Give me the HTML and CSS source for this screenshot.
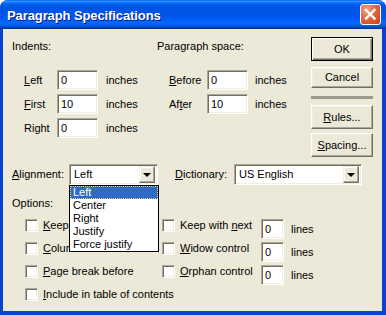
FILE: index.html
```html
<!DOCTYPE html>
<html>
<head>
<meta charset="utf-8">
<link rel="stylesheet" href="styles.css">
</head>
<body>
<div class="window">
  <div class="titlebar">
    <span class="title">Paragraph Specifications</span>
    <span class="close">
      <svg width="21" height="21" viewBox="0 0 21 21"><path d="M6 6 L14.5 14.5 M14.5 6 L6 14.5" stroke="#fff" stroke-width="2.4" stroke-linecap="square"/></svg>
    </span>
  </div>
  <div class="client">
    <div class="top">
      <div class="groups">
        <div class="group indents">
          <div class="group-title">Indents:</div>
          <div class="fields">
            <span class="lbl"><u>L</u>eft</span><span class="input">0</span><span class="unit">inches</span>
            <span class="lbl"><u>F</u>irst</span><span class="input">10</span><span class="unit">inches</span>
            <span class="lbl">Right</span><span class="input">0</span><span class="unit">inches</span>
          </div>
        </div>
        <div class="group para">
          <div class="group-title">Paragraph space:</div>
          <div class="fields">
            <span class="lbl"><u>B</u>efore</span><span class="input">0</span><span class="unit">inches</span>
            <span class="lbl">Af<u>t</u>er</span><span class="input">10</span><span class="unit">inches</span>
          </div>
        </div>
      </div>
      <div class="buttons">
        <div class="btn default">OK</div>
        <div class="btn cancel">Cancel</div>
        <div class="sep"></div>
        <div class="btn"><u>R</u>ules...</div>
        <div class="btn"><u>S</u>pacing...</div>
      </div>
    </div>
    <div class="align-row">
      <span class="lbl align-lbl"><u>A</u>lignment:</span>
      <div class="combo align-combo">
        <span class="value">Left</span>
        <span class="arrow"><span class="tri"></span></span>
        <div class="droplist">
          <div class="item selected"><span>Left</span></div>
          <div class="item">Center</div>
          <div class="item">Right</div>
          <div class="item">Justify</div>
          <div class="item">Force justify</div>
        </div>
      </div>
      <span class="lbl dict-lbl"><u>D</u>ictionary:</span>
      <div class="combo dict-combo">
        <span class="value">US English</span>
        <span class="arrow"><span class="tri"></span></span>
      </div>
    </div>
    <div class="options">
      <div class="group-title">Options:</div>
      <div class="opt-grid">
        <label class="chk"><span class="box"></span><span><u>K</u>eep lines together</span></label>
        <label class="chk"><span class="box"></span><span>Keep with <u>n</u>ext</span></label>
        <span class="input small">0</span><span class="unit lines">lines</span>

        <label class="chk"><span class="box"></span><span><u>C</u>olumn break before</span></label>
        <label class="chk"><span class="box"></span><span><u>W</u>idow control</span></label>
        <span class="input small">0</span><span class="unit lines">lines</span>

        <label class="chk"><span class="box"></span><span><u>P</u>age break before</span></label>
        <label class="chk"><span class="box"></span><span><u>O</u>rphan control</span></label>
        <span class="input small">0</span><span class="unit lines">lines</span>

        <label class="chk wide"><span class="box"></span><span><u>I</u>nclude in table of contents</span></label>
      </div>
    </div>
  </div>
</div>
</body>
</html>
```
FILE: styles.css
```css
html, body {
  margin: 0;
  padding: 0;
  background: #ffffff;
}

.window {
  width: 386px;
  height: 315px;
  box-sizing: border-box;
  display: flex;
  flex-direction: column;
  background: #0843d6;
  border-radius: 8px 8px 0 0;
  overflow: hidden;
  font-family: "Liberation Sans", Arial, sans-serif;
  font-size: 11px;
  color: #000;
}

.titlebar {
  height: 29px;
  flex: none;
  display: flex;
  align-items: center;
  padding: 0 5px 0 7px;
  box-sizing: border-box;
  background: linear-gradient(to bottom, #0058ee 0%, #3593ff 4%, #288eff 6%, #127dff 8%, #036ffc 10%, #0262ee 14%, #0057e5 20%, #0054e3 24%, #0055eb 56%, #005bf5 66%, #026afe 76%, #0062ef 86%, #0052d6 92%, #0040ab 96%, #003092 100%);
}

.title {
  font-weight: bold;
  font-size: 13px;
  color: #fff;
  text-shadow: 1px 1px 0 #0a1883;
  padding-top: 2px;
  letter-spacing: -0.1px;
}

.close {
  margin-left: auto;
  width: 21px;
  height: 21px;
  box-sizing: border-box;
  border: 1px solid #fff;
  border-radius: 3px;
  background: radial-gradient(circle at 30% 25%, #f3a586 0%, #e2683f 45%, #c83d18 100%);
  display: flex;
  align-items: center;
  justify-content: center;
}

.close svg {
  display: block;
  margin: -1px;
}

.client {
  flex: 1;
  margin: 0 4px 4px 3px;
  background: #ece9d8;
  padding: 8px 0 0 9px;
  position: relative;
}

.top {
  display: flex;
  align-items: flex-start;
}

.groups {
  width: 299px;
  display: flex;
  margin-top: 3px;
}

.indents {
  width: 145px;
}

.para {
  flex: 1;
}

.group-title {
  line-height: 13px;
  height: 13px;
}

.fields {
  display: grid;
  align-items: center;
  row-gap: 4px;
  margin-top: 17px;
  padding-left: 12px;
}

.indents .fields {
  grid-template-columns: 33px 41px auto;
}

.para .fields {
  grid-template-columns: 38px 41px auto;
}

.lbl {
  line-height: 13px;
  white-space: nowrap;
}

.unit {
  line-height: 13px;
  margin-left: 8px;
}

.para .unit {
  margin-left: 7px;
}

.input {
  height: 20px;
  width: 41px;
  box-sizing: border-box;
  background: #fff;
  border: 1px solid;
  border-color: #aca899 #ffffff #ffffff #aca899;
  box-shadow: inset 1px 1px 0 #716f64, inset -1px -1px 0 #f1efe2;
  padding-left: 3px;
  display: flex;
  align-items: center;
  line-height: 13px;
}

.buttons {
  width: 62px;
  display: flex;
  flex-direction: column;
  gap: 4px;
}

.btn {
  height: 24px;
  box-sizing: border-box;
  border: 1px solid;
  border-color: #ffffff #716f64 #716f64 #ffffff;
  box-shadow: inset -1px -1px 0 #aca899, inset 1px 1px 0 #f1efe2;
  display: flex;
  align-items: center;
  justify-content: center;
  background: #ece9d8;
  line-height: 13px;
}

.btn.default {
  border-color: #000;
  box-shadow: inset 1px 1px 0 #fff, inset -1px -1px 0 #716f64, inset -2px -2px 0 #aca899;
  margin-bottom: 2px;
}

.btn.cancel {
  height: 21px;
  margin-bottom: 4px;
}

.sep {
  height: 3px;
  background: #9c9a8e;
  margin-bottom: 2px;
}

.align-row {
  display: flex;
  align-items: center;
  height: 21px;
  margin-top: 7px;
}

.align-lbl {
  width: 57px;
}

.dict-lbl {
  width: 59px;
  margin-left: 17px;
}

.combo {
  height: 21px;
  box-sizing: border-box;
  background: #fff;
  border: 1px solid;
  border-color: #aca899 #ffffff #ffffff #aca899;
  box-shadow: inset 1px 1px 0 #716f64, inset -1px -1px 0 #f1efe2;
  padding: 2px 2px 2px 4px;
  display: flex;
  align-items: center;
  position: relative;
}

.align-combo {
  width: 89px;
}

.dict-combo {
  width: 128px;
}

.combo .value {
  flex: 1;
  line-height: 13px;
}

.arrow {
  width: 16px;
  height: 17px;
  box-sizing: border-box;
  border: 1px solid;
  border-color: #f1efe2 #716f64 #716f64 #f1efe2;
  box-shadow: inset -1px -1px 0 #aca899, inset 1px 1px 0 #fff;
  background: #ece9d8;
  display: flex;
  align-items: center;
  justify-content: center;
}

.tri {
  width: 0;
  height: 0;
  border-left: 4px solid transparent;
  border-right: 4px solid transparent;
  border-top: 4px solid #000;
  margin-top: 1px;
}

.droplist {
  position: absolute;
  left: -1px;
  top: 20px;
  width: 90px;
  box-sizing: border-box;
  border: 1px solid #000;
  background: #fff;
  z-index: 5;
}

.item {
  height: 13px;
  line-height: 13px;
  padding-left: 3px;
  white-space: nowrap;
}

.item.selected {
  background: #316ac5;
  color: #fff;
  padding-left: 0;
  display: flex;
}

.item.selected span {
  flex: 1;
  border: 1px dotted #f0d27a;
  line-height: 11px;
  padding-left: 2px;
}

.options {
  margin-top: 12px;
}

.opt-grid {
  display: grid;
  grid-template-columns: 137px 99px 23px auto;
  grid-auto-rows: 23px;
  margin-top: 9px;
  padding-left: 13px;
}

.chk {
  display: flex;
  align-items: flex-start;
  white-space: nowrap;
}

.chk.wide {
  grid-column: 1 / 4;
}

.box {
  width: 13px;
  height: 13px;
  flex: none;
  box-sizing: border-box;
  background: #fff;
  border: 1px solid;
  border-color: #aca899 #ffffff #ffffff #aca899;
  box-shadow: inset 1px 1px 0 #716f64, inset -1px -1px 0 #f1efe2;
  margin-right: 5px;
}

.chk span:last-child {
  line-height: 13px;
}

.input.small {
  width: 23px;
}

.lines {
  margin-left: 7px;
  line-height: 20px;
}
```
